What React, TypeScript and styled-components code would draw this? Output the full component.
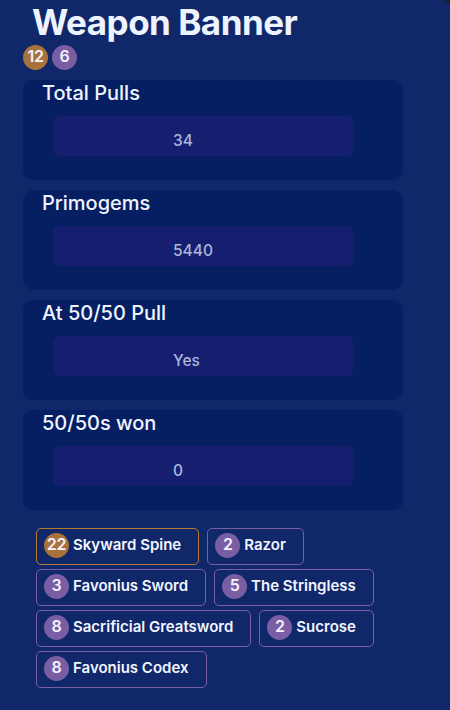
import React from "react";
import styled, { createGlobalStyle } from "styled-components";

const Global = createGlobalStyle`
  html, body { margin: 0; padding: 0; background: #1c1c2c; }
  body { font-family: Inter, "Noto Sans", sans-serif; }
`;

const Page = styled.div`
  min-height: 710px;
  background: #10286a;
  border-top-right-radius: 8px;
  padding: 0 0 20px 23px;
  box-sizing: border-box;
  color: #eef3ff;
`;

const Title = styled.h1`
  margin: 0;
  padding-left: 9px;
  font-size: 35px;
  font-weight: 700;
  line-height: 44px;
  color: #eef4ff;
  letter-spacing: -0.5px;
`;

const BadgeRow = styled.div`
  display: flex;
  gap: 4px;
  margin-top: 1px;
`;

const Count = styled.span<{ $gold?: boolean }>`
  width: 25px;
  height: 25px;
  border-radius: 50%;
  background: ${(p) => (p.$gold ? "#a8733a" : "#7a5ea3")};
  color: #f4f1ff;
  font-size: 16px;
  font-weight: 600;
  letter-spacing: -0.3px;
  display: flex;
  align-items: center;
  justify-content: center;
  padding-bottom: 3px;
  box-sizing: border-box;
  flex-shrink: 0;
`;

const Cards = styled.div`
  display: flex;
  flex-direction: column;
  gap: 10px;
  margin-top: 10px;
  width: 380px;
`;

const Card = styled.section`
  height: 100px;
  box-sizing: border-box;
  background: #061e62;
  border-radius: 10px;
  padding: 1px 0 0 19px;
`;

const CardTitle = styled.div`
  font-size: 20px;
  font-weight: 500;
  line-height: 24px;
  color: #f0f4ff;
`;

const ValueBox = styled.div`
  margin: 11px 0 0 11px;
  width: 300px;
  height: 40px;
  box-sizing: border-box;
  border-radius: 6px;
  background: #161f6f;
  padding: 15px 0 0 120px;
  font-size: 15.5px;
  font-weight: 500;
  line-height: 19px;
  color: #aab6dc;
`;

const Chips = styled.div`
  display: flex;
  flex-wrap: wrap;
  gap: 4px 8px;
  margin: 18px 0 0 13px;
  width: 367px;
`;

const Chip = styled.div<{ $gold?: boolean }>`
  display: flex;
  align-items: center;
  gap: 4px;
  height: 37px;
  box-sizing: border-box;
  padding: 0 17px 2px 7px;
  border: 1px solid ${(p) => (p.$gold ? "#b47a2e" : "#7a5ea3")};
  border-radius: 5px;
`;

const ChipName = styled.span`
  font-size: 15px;
  font-weight: 600;
  color: #f2f5ff;
  white-space: nowrap;
  padding-bottom: 3px;
`;

const stats = [
  { label: "Total Pulls", value: "34" },
  { label: "Primogems", value: "5440" },
  { label: "At 50/50 Pull", value: "Yes" },
  { label: "50/50s won", value: "0" },
];

const items = [
  { n: 22, name: "Skyward Spine", gold: true },
  { n: 2, name: "Razor" },
  { n: 3, name: "Favonius Sword" },
  { n: 5, name: "The Stringless" },
  { n: 8, name: "Sacrificial Greatsword" },
  { n: 2, name: "Sucrose" },
  { n: 8, name: "Favonius Codex" },
];

export default function App() {
  return (
    <>
      <Global />
      <Page>
        <Title>Weapon Banner</Title>
        <BadgeRow>
          <Count $gold>12</Count>
          <Count>6</Count>
        </BadgeRow>
        <Cards>
          {stats.map((s) => (
            <Card key={s.label}>
              <CardTitle>{s.label}</CardTitle>
              <ValueBox>{s.value}</ValueBox>
            </Card>
          ))}
        </Cards>
        <Chips>
          {items.map((it) => (
            <Chip key={it.name} $gold={it.gold}>
              <Count $gold={it.gold}>{it.n}</Count>
              <ChipName>{it.name}</ChipName>
            </Chip>
          ))}
        </Chips>
      </Page>
    </>
  );
}
